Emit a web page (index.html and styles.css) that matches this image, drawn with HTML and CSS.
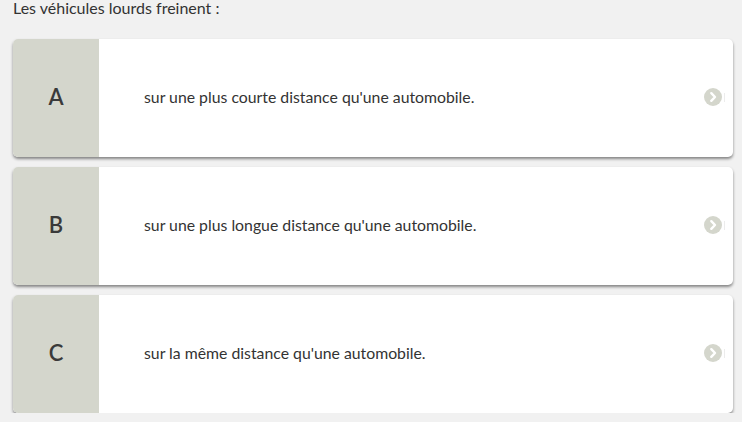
FILE: index.html
```html
<!DOCTYPE html>
<html lang="fr">
<head>
<meta charset="utf-8">
<link rel="stylesheet" href="styles.css">
</head>
<body>
<div class="page">
  <p class="question">Les véhicules lourds freinent :</p>
  <div class="answers">
    <div class="answer">
      <div class="letter">A</div>
      <div class="text">sur une plus courte distance qu'une automobile.</div>
      <div class="go"><svg width="18" height="18" viewBox="0 0 18 18"><circle cx="9" cy="9" r="9" fill="#d4d6cc"/><path d="M7.3 5.2 L11 9 L7.3 12.8" fill="none" stroke="#fff" stroke-width="2.4" stroke-linecap="round" stroke-linejoin="round"/></svg><span class="tick"></span></div>
    </div>
    <div class="answer">
      <div class="letter">B</div>
      <div class="text">sur une plus longue distance qu'une automobile.</div>
      <div class="go"><svg width="18" height="18" viewBox="0 0 18 18"><circle cx="9" cy="9" r="9" fill="#d4d6cc"/><path d="M7.3 5.2 L11 9 L7.3 12.8" fill="none" stroke="#fff" stroke-width="2.4" stroke-linecap="round" stroke-linejoin="round"/></svg><span class="tick"></span></div>
    </div>
    <div class="answer">
      <div class="letter">C</div>
      <div class="text">sur la même distance qu'une automobile.</div>
      <div class="go"><svg width="18" height="18" viewBox="0 0 18 18"><circle cx="9" cy="9" r="9" fill="#d4d6cc"/><path d="M7.3 5.2 L11 9 L7.3 12.8" fill="none" stroke="#fff" stroke-width="2.4" stroke-linecap="round" stroke-linejoin="round"/></svg><span class="tick"></span></div>
    </div>
  </div>
</div>
</body>
</html>
```
FILE: styles.css
```css
html, body {
  margin: 0;
  padding: 0;
  background: #f1f1f1;
}
body {
  font-family: Lato, "Open Sans", sans-serif;
  color: #333;
}
.page {
  padding: 0 9px 0 13px;
}
.question {
  margin: 0;
  font-size: 16px;
  line-height: 16px;
  color: #333;
}
.answers {
  margin-top: 23px;
  display: flex;
  flex-direction: column;
  gap: 10px;
}
.answer {
  display: flex;
  align-items: center;
  height: 118px;
  background: #fff;
  border-radius: 5px;
  overflow: hidden;
  box-shadow: 0 2px 3px rgba(0,0,0,0.45);
}
.letter {
  width: 86px;
  align-self: stretch;
  box-sizing: border-box;
  padding-bottom: 4px;
  background: #d4d6cc;
  display: flex;
  align-items: center;
  justify-content: center;
  font-size: 22px;
  font-weight: 600;
  color: #3a3a3a;
}
.text {
  flex: 1;
  padding-left: 45px;
  padding-bottom: 4px;
  font-size: 15.8px;
  color: #333;
}
.go {
  display: flex;
  align-items: center;
  gap: 2px;
  margin-right: 8px;
  padding-bottom: 2px;
}
.go svg { display: block; }
.tick {
  width: 1px;
  height: 9px;
  background: #ececec;
}
```
